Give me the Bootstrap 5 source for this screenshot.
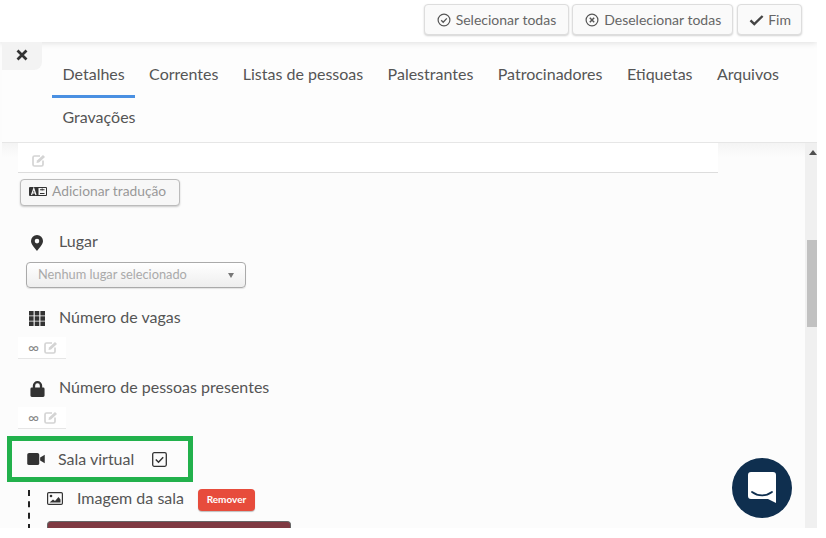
<!DOCTYPE html>
<html lang="pt"><head><meta charset="utf-8"><title>Sala virtual</title>
<link href="https://cdn.jsdelivr.net/npm/bootstrap@5.3.0/dist/css/bootstrap.min.css" rel="stylesheet">
<style>
html,body{background:#fff;margin:0;overflow:hidden}
body{font-family:Lato,"Liberation Sans",sans-serif;color:#555}
.shot{width:817px;height:528px;overflow:hidden;position:relative;background:#fcfcfc}
.topbar{height:42px;background:#fff;box-shadow:0 1px 6px rgba(0,0,0,.12);position:relative;z-index:3;padding:4px 15px 0 0;gap:3px}
.tbtn{height:31px;padding:0 11px 0 12px;font-size:14px;line-height:29px;color:#666;background:#fafafa;border:1px solid #ddd;border-radius:4px;box-shadow:0 1px 2px rgba(0,0,0,.18);gap:5px}
.tbtn.wider{padding-right:12px}
.tbtn.endbtn{padding:0 10px 0 11px;margin-left:1px;gap:4px}
.tabsbar{height:101px;background:#fdfdfd;border-bottom:1px solid #e6e6e6;padding-left:50px;position:relative;margin-left:2px;z-index:2}
.tabitem{height:56px;padding:20px 10.5px 0;font-size:16px;line-height:24px;color:#555;margin-right:3.4px}
.tabitem.on{border-bottom:3px solid #4a90e2}
.tabitem.second{height:43px;padding-top:7px}
.closer{position:absolute;left:2px;top:42px;width:40px;height:28px;background:#f3f3f3;border-bottom-right-radius:8px;z-index:4;padding-top:7px}
.mainrow{height:385px;margin-left:2px}
.scrollarea{width:803px;padding-left:16px;background:linear-gradient(#f4f4f4,#fcfcfc 14px)}
.rail{width:12px;background:#f0f0f0;position:relative;padding-left:2px}
.railthumb{height:87px;background:#c1c1c1;margin-top:97px}
.railup{width:0;height:0;border-left:4px solid transparent;border-right:4px solid transparent;border-bottom:5px solid #505050;position:absolute;left:4px;top:7px}
.descbox{width:700px;height:30px;background:#fff;border-bottom:1px solid #ddd;padding:11px 0 0 14px}
.addtrans{margin:6px 0 0 2px;width:160px;height:27px;background:#f7f7f7;border:1px solid #bbb;border-radius:4px;box-shadow:0 1px 2px rgba(0,0,0,.2);font-size:13.8px;line-height:20px;color:#999;padding:0 0 3px 8px;gap:5px}
.fieldrow{font-size:16px;line-height:20px;color:#555}
.fic{width:18px;display:flex;justify-content:center;margin-right:13px;flex:none}
.lugar{margin:25px 0 0 10px}
.selectbox{width:220px;height:26px;margin:11px 0 0 8px;border:1px solid #aaa;border-radius:4px;background:linear-gradient(#fff,#eee);font-size:12.8px;line-height:18px;color:#aaa;padding:0 11px 3px;box-shadow:0 1px 1px rgba(0,0,0,.1)}
.caretdown{width:0;height:0;border-left:3.5px solid transparent;border-right:3.5px solid transparent;border-top:5px solid #777;margin-top:3px}
.vagas{margin:19px 0 0 10px}
.pessoas{margin:18px 0 0 10px}
.inf{width:48px;height:22px;background:#fff;border-bottom:1px solid #e6e6e6;margin:10px 0 0 0;padding-left:10px;font-size:15px;line-height:20px;color:#888;gap:5px}
.virtualbox{width:186px;height:46px;margin:7px 0 0 -11px;border:5px solid #22b14c;padding-left:15px}
.vt{margin-right:18px}
.subrow{margin:0;height:48px}
.dash{width:0;height:40px;border-left:2px dashed #222;margin:8px 16px 0 10px;flex:none}
.imgrow{font-size:16px;line-height:20px;padding-top:6px}
.removebtn{background:#e74c3c;color:#fff;font-size:10px;font-weight:700;height:22px;line-height:21px;width:57px;text-align:center;border-radius:4px;margin:2px 0 0 14px;box-shadow:0 1px 1px rgba(0,0,0,.25)}
.thumbpic{width:244px;height:8px;background:#7f3a42;border:1px solid #666;border-bottom:0;border-radius:4px 4px 0 0;margin:9px 0 0 1px}
.chatfab{position:absolute;left:732px;top:458px;width:60px;height:60px;border-radius:50%;background:#0f2f4f;z-index:6}
.edt{display:block}
.imgrow .removebtn{margin-top:2px;transform:translateY(-1px)}
</style></head><body>
<div class="shot">
 <div class="topbar d-flex justify-content-end align-items-start">
  <div class="tbtn wider d-flex align-items-center"><svg width="14" height="14" viewBox="0 0 14 14"><circle cx="7" cy="7" r="5.900" fill="none" stroke="#555" stroke-width="1.200"/><path d="M4.200 7.200l2 2 3.600-3.800" fill="none" stroke="#555" stroke-width="1.300"/></svg><span>Selecionar todas</span></div>
  <div class="tbtn d-flex align-items-center"><svg width="14" height="14" viewBox="0 0 14 14"><circle cx="7" cy="7" r="5.900" fill="none" stroke="#555" stroke-width="1.200"/><path d="M4.800 4.800l4.400 4.400M9.200 4.800l-4.400 4.400" fill="none" stroke="#555" stroke-width="1.500"/></svg><span>Deselecionar todas</span></div>
  <div class="tbtn endbtn d-flex align-items-center"><svg width="15" height="12" viewBox="0 0 15 12"><path d="M1.500 6.300l3.800 3.800L13.600 2" fill="none" stroke="#444" stroke-width="2.400"/></svg><span>Fim</span></div>
 </div>
 <div class="closer d-flex justify-content-center"><svg width="12" height="12" viewBox="0 0 12 12"><path d="M1.500 1.500l9 9M10.500 1.500l-9 9" stroke="#333" stroke-width="2.700"/></svg></div>
 <div class="tabsbar">
  <div class="d-flex flex-wrap">
   <div class="tabitem on">Detalhes</div><div class="tabitem">Correntes</div><div class="tabitem">Listas de pessoas</div><div class="tabitem">Palestrantes</div><div class="tabitem">Patrocinadores</div><div class="tabitem">Etiquetas</div><div class="tabitem">Arquivos</div><div class="tabitem second">Gravações</div>
  </div>
 </div>
 <div class="mainrow d-flex">
  <div class="scrollarea">
   <div class="descbox"><svg class="edt" width="14" height="13" viewBox="0 0 14 13"><path d="M11 6.500V10.500a1.500 1.500 0 0 1-1.500 1.500h-7A1.500 1.500 0 0 1 1 10.500v-7A1.500 1.500 0 0 1 2.500 2H8" fill="none" stroke="#d4d4d4" stroke-width="1.700"/><path d="M5 6.500L11 1l2 2-6 5.500-2.500.5z" fill="#d4d4d4"/></svg></div>
   <div class="addtrans d-flex align-items-center"><svg width="18" height="9" viewBox="0 0 18 9"><rect width="18" height="9" rx="1" fill="#333"/><rect x="9.500" y="1" width="7.500" height="7" fill="#f7f7f7"/><path d="M2.500 8L4.800 1.500 7 8M3.500 6h2.600" stroke="#f7f7f7" stroke-width="1.200" fill="none"/><path d="M11 2.800h4.500M11 6.500h4.500M13.200 1.500v2" stroke="#333" stroke-width="1.100"/></svg><span>Adicionar tradução</span></div>
   <div class="fieldrow lugar d-flex"><span class="fic"><svg width="12" height="16" viewBox="0 0 12 16" class="mt-1"><path fill-rule="evenodd" d="M6 0a6 6 0 0 1 6 6c0 3-3.500 7-6 10C3.500 13 0 9 0 6a6 6 0 0 1 6-6zm0 3.800a2.300 2.300 0 1 0 0 4.600 2.300 2.300 0 0 0 0-4.600z" fill="#333"/></svg></span>Lugar</div>
   <div class="selectbox d-flex justify-content-between align-items-center"><span>Nenhum lugar selecionado</span><span class="caretdown"></span></div>
   <div class="fieldrow vagas d-flex"><span class="fic"><svg width="16" height="15" viewBox="0 0 16 15" class="mt-1"><path d="M0 0h4.600v4.400H0zM5.700 0h4.600v4.400H5.700zM11.400 0H16v4.400h-4.600zM0 5.300h4.600v4.400H0zM5.700 5.300h4.600v4.400H5.700zM11.400 5.300H16v4.400h-4.600zM0 10.600h4.600V15H0zM5.700 10.600h4.600V15H5.700zM11.400 10.600H16V15h-4.600z" fill="#333"/></svg></span>Número de vagas</div>
   <div class="inf d-flex"><span>∞</span><svg class="mt-1" width="14" height="13" viewBox="0 0 14 13"><path d="M11 6.500V10.500a1.500 1.500 0 0 1-1.500 1.500h-7A1.500 1.500 0 0 1 1 10.500v-7A1.500 1.500 0 0 1 2.500 2H8" fill="none" stroke="#d4d4d4" stroke-width="1.700"/><path d="M5 6.500L11 1l2 2-6 5.500-2.500.5z" fill="#d4d4d4"/></svg></div>
   <div class="fieldrow pessoas d-flex"><span class="fic"><svg width="15" height="16" viewBox="0 0 15 17" class="mt-1"><path fill-rule="evenodd" d="M2.500 7V5a5 5 0 0 1 10 0v2h1a1.500 1.500 0 0 1 1.500 1.500v7a1.500 1.500 0 0 1-1.500 1.500h-12A1.500 1.500 0 0 1 0 15.500v-7A1.500 1.500 0 0 1 1.500 7zM5 7h5V5a2.500 2.500 0 0 0-5 0z" fill="#333"/></svg></span>Número de pessoas presentes</div>
   <div class="inf d-flex"><span>∞</span><svg class="mt-1" width="14" height="13" viewBox="0 0 14 13"><path d="M11 6.500V10.500a1.500 1.500 0 0 1-1.500 1.500h-7A1.500 1.500 0 0 1 1 10.500v-7A1.500 1.500 0 0 1 2.500 2H8" fill="none" stroke="#d4d4d4" stroke-width="1.700"/><path d="M5 6.500L11 1l2 2-6 5.500-2.500.5z" fill="#d4d4d4"/></svg></div>
   <div class="virtualbox fieldrow d-flex align-items-center"><span class="fic"><svg width="18" height="12" viewBox="0 0 19 13"><rect width="13" height="13" rx="2" fill="#333"/><path d="M14 5l5-3v9l-5-3z" fill="#333"/></svg></span><span class="vt">Sala virtual</span><svg width="15" height="15" viewBox="0 0 15 15"><rect x=".7" y=".7" width="13.600" height="13.600" rx="1.500" fill="none" stroke="#333" stroke-width="1.300"/><path d="M3.800 7.500l2.700 2.700 4.700-5" fill="none" stroke="#333" stroke-width="1.500"/></svg></div>
   <div class="subrow d-flex">
    <span class="dash"></span>
    <div>
     <div class="imgrow d-flex align-items-start"><span class="fic"><svg width="16" height="13" viewBox="0 0 16 13" class="mt-1"><rect x=".6" y=".6" width="14.800" height="11.800" rx="1.200" fill="none" stroke="#333" stroke-width="1.200"/><circle cx="4" cy="4" r="1.300" fill="#333"/><path d="M2.500 10.500l3.500-3 2 1.500 3.500-4 2 2.500v3z" fill="#333"/></svg></span><span>Imagem da sala</span><span class="removebtn">Remover</span></div>
     <div class="thumbpic"></div>
    </div>
   </div>
  </div>
  <div class="rail"><span class="railup"></span><div class="railthumb"></div></div>
 </div>
 <div class="chatfab d-flex align-items-center justify-content-center"><svg width="28" height="32" viewBox="0 0 28 32"><path d="M3 0h22a3 3 0 0 1 3 3v28l-8-4H3a3 3 0 0 1-3-3V3a3 3 0 0 1 3-3z" fill="#fff"/><path d="M4 20c6 4.500 14 4.500 20 0" fill="none" stroke="#0f2f4f" stroke-width="1.800" stroke-linecap="round"/></svg></div>
</div>
</body></html>
